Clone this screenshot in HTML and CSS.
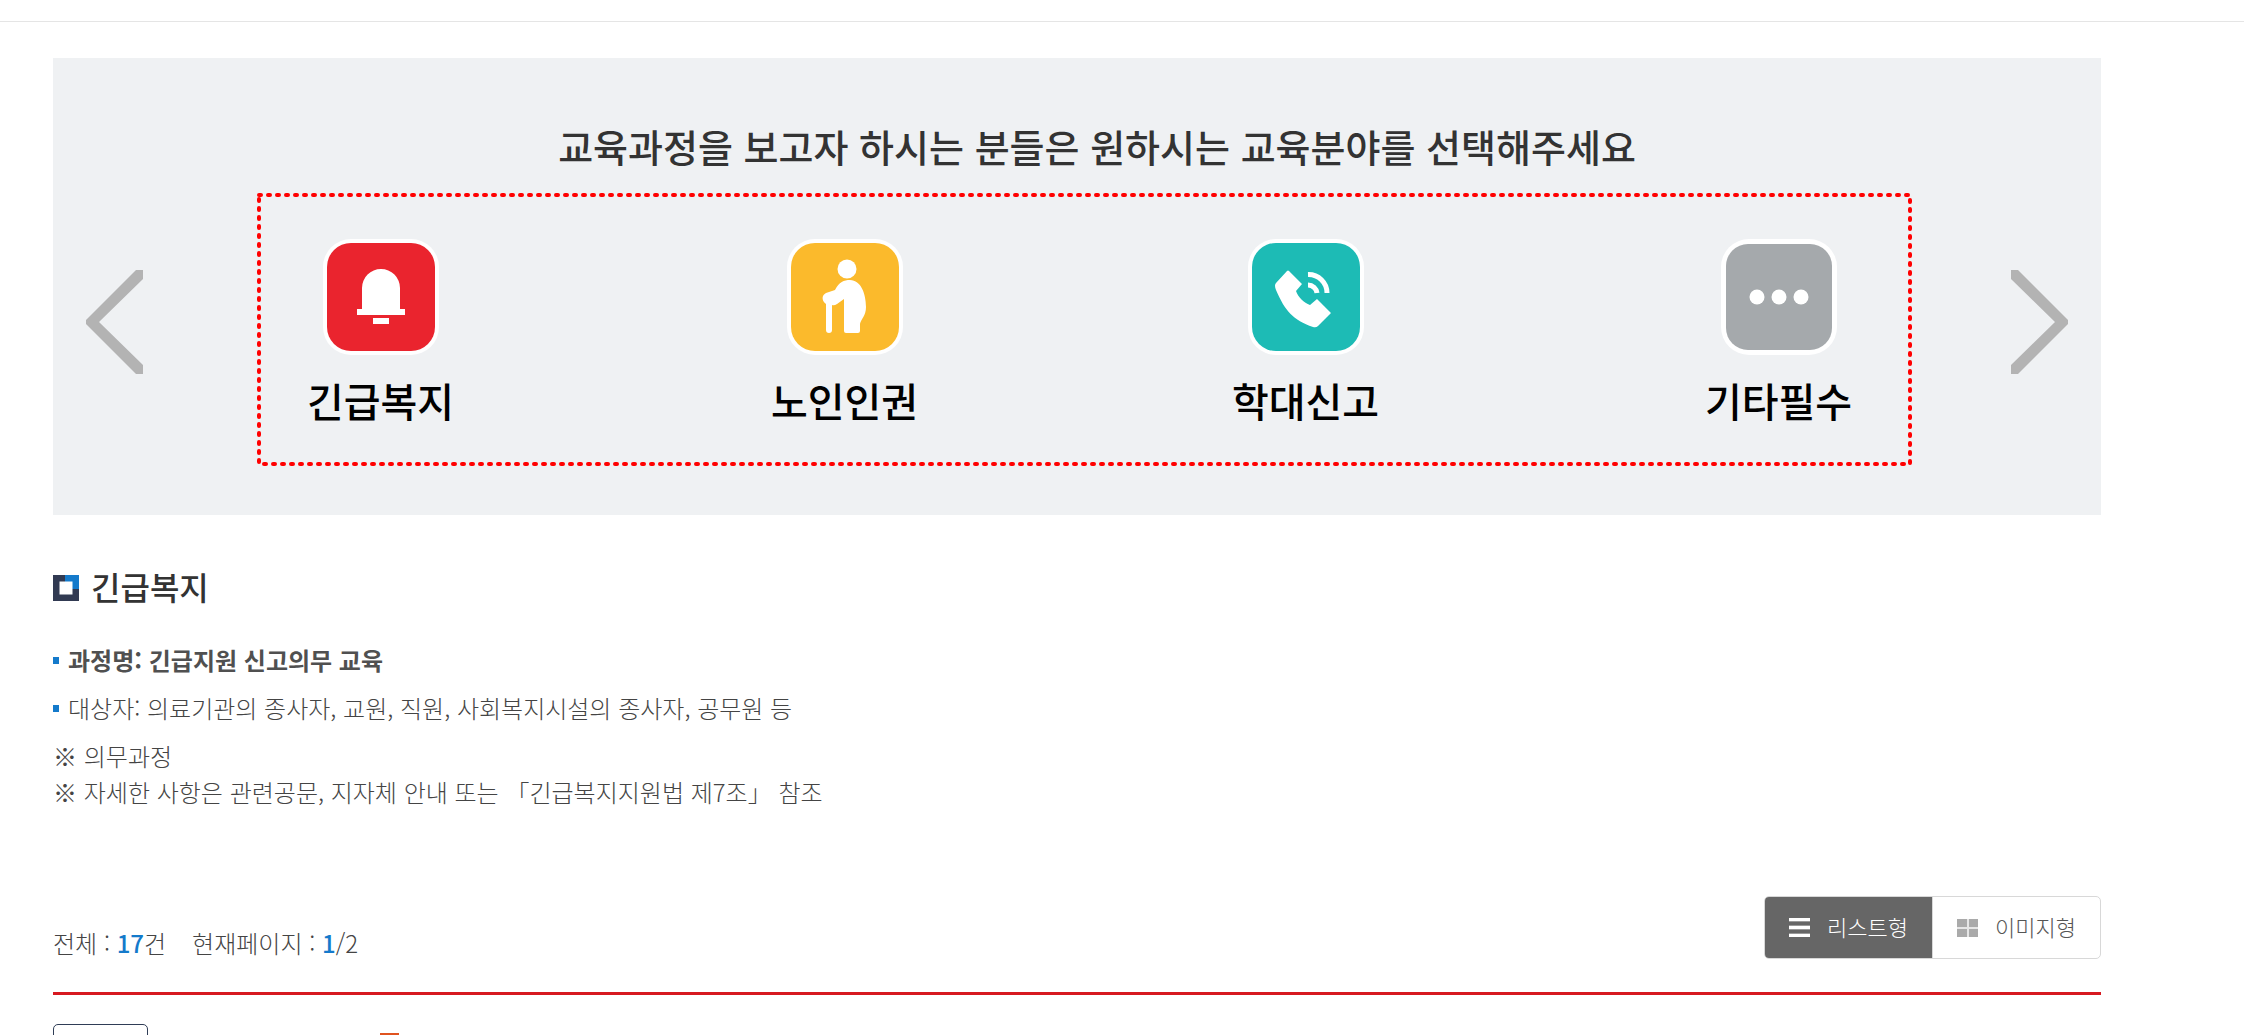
FILE: index.html
```html
<!DOCTYPE html>
<html lang="ko">
<head>
    <meta charset="UTF-8">
    <meta name="viewport" content="width=device-width, initial-scale=1.0">
    <title>긴급복지</title>
    <link rel="stylesheet" href="styles.css">
</head>
<body>
    <header class="top-bar"></header>
    <main class="content">
        <section class="category-panel">
            <h2>교육과정을 보고자 하시는 분들은 원하시는 교육분야를 선택해주세요</h2>
            <div class="category-row">
                <button type="button" class="arrow" aria-label="이전">
                    <svg width="57" height="104" viewBox="0 0 57 104"><path fill="#b3b3b3" d="M0 50 50 0h7v9L13 52l44 43v9h-7L0 54z"/></svg>
                </button>
                <div class="category-list">
                    <svg class="dashed-frame"><rect x="2" y="2"/></svg>
                    <a href="#" class="category">
                        <svg class="category-icon" viewBox="0 0 116 116">
                            <rect width="116" height="116" rx="28" fill="#fff"/>
                            <rect x="4" y="4" width="108" height="108" rx="24" fill="#ea242e"/>
                            <path fill="#fff" d="M39 70V49a19 19 0 0 1 38 0v21h5v6H34v-6zM50 79h16v6H50z"/>
                        </svg>
                        <span>긴급복지</span>
                    </a>
                    <a href="#" class="category">
                        <svg class="category-icon" viewBox="0 0 116 116">
                            <rect width="116" height="116" rx="28" fill="#fff"/>
                            <rect x="4" y="4" width="108" height="108" rx="24" fill="#fbba2c"/>
                            <circle cx="60" cy="30" r="9.500" fill="#fff"/>
                            <path fill="#fff" d="M48 51C52 43 57 41 63 41c11 0 16 14 16 27 0 9-5 12-6 17v7q0 2-2 2H59q-2 0-2-2V60l-7 5q-3 2-5 1v25a3 3 0 0 1-6 0V65c-5-4-4-9 0-11z"/>
                        </svg>
                        <span>노인인권</span>
                    </a>
                    <a href="#" class="category">
                        <svg class="category-icon" viewBox="0 0 116 116">
                            <rect width="116" height="116" rx="28" fill="#fff"/>
                            <rect x="4" y="4" width="108" height="108" rx="24" fill="#1dbbb5"/>
                            <path fill="#fff" d="M39 32q1-1 2 0l13 13-6 7c2 6 8 12 14 14l7-6 14 14-13 13q-2 2-5 1C45 81 37 72 28 51q-2-5 0-7z"/>
                            <path fill="none" stroke="#fff" stroke-width="5" d="M60 35.500a18.500 18.500 0 0 1 19 18.500M60 46a9 9 0 0 1 9 8"/>
                        </svg>
                        <span>학대신고</span>
                    </a>
                    <a href="#" class="category">
                        <svg class="category-icon" viewBox="0 0 116 116">
                            <rect width="116" height="116" rx="28" fill="#fff"/>
                            <rect x="5" y="5" width="106" height="106" rx="22" fill="#a5a9ac"/>
                            <g fill="#fff"><circle cx="36" cy="58" r="7.500"/><circle cx="58" cy="58" r="7.500"/><circle cx="80" cy="58" r="7.500"/></g>
                        </svg>
                        <span>기타필수</span>
                    </a>
                </div>
                <button type="button" class="arrow" aria-label="다음">
                    <svg width="57" height="104" viewBox="0 0 57 104"><path fill="#b3b3b3" d="M57 50 7 0H0v9l44 43L0 95v9h7l50-50z"/></svg>
                </button>
            </div>
        </section>

        <section class="course-info">
            <h3>
                <svg width="26" height="26" viewBox="0 0 26 26">
                    <path fill="#313a52" d="M0 0h26v26H0z"/>
                    <path fill="#147acb" d="M12 0h14v14H12z"/>
                    <path fill="#fff" d="M6.500 6.500h13v13h-13z"/>
                </svg>
                긴급복지
            </h3>
            <ul>
                <li><strong>과정명: 긴급지원 신고의무 교육</strong></li>
                <li>대상자: 의료기관의 종사자, 교원, 직원, 사회복지시설의 종사자, 공무원 등</li>
            </ul>
            <p>※ 의무과정</p>
            <p>※ 자세한 사항은 관련공문, 지자체 안내 또는 「긴급복지지원법 제7조」 참조</p>
        </section>

        <div class="list-top">
            <p class="list-count">
                <span>전체 : <b>17</b>건</span>
                <span>현재페이지 : <b>1</b>/2</span>
            </p>
            <div class="view-type">
                <button type="button" class="active">
                    <svg width="21" height="20" viewBox="0 0 21 20"><path fill="#fff" d="M0 0h21v3H0zM0 8h21v3H0zM0 16h21v3H0z"/><path fill="#999" d="M0 3h21v1H0zM0 7h21v1H0zM0 11h21v1H0zM0 15h21v1H0z"/></svg>
                    리스트형
                </button>
                <button type="button">
                    <svg width="21" height="20" viewBox="0 0 21 20"><path fill="#e6e6e6" d="M0 1h21v18H0z"/><path fill="#aaa" d="M0 1h10v8H0zM12 1h9v8h-9zM0 11h10v8H0zM12 11h9v8h-9z"/></svg>
                    이미지형
                </button>
            </div>
        </div>

        <div class="course-list">
            <span class="course-label"></span>
            <span class="course-mark"></span>
        </div>
    </main>
</body>
</html>
```

FILE: styles.css
```css
* {
    margin: 0;
    padding: 0;
    box-sizing: border-box;
}

body {
    height: 100vh;
    overflow: hidden;
    background: #fff;
    color: #444;
    font-family: "Noto Sans CJK KR", sans-serif;
    font-size: 24px;
    font-weight: 300;
    line-height: 36px;
}

button {
    border: none;
    background: none;
    font: inherit;
    color: inherit;
    cursor: pointer;
}

svg {
    display: block;
    flex-shrink: 0;
}

.top-bar {
    height: 22px;
    border-bottom: 1px solid #e5e5e5;
}

.content {
    padding: 36px 143px 0 53px;
}

/* category selector */
.category-panel {
    padding: 58px 33px 49px;
    background: #eff1f3;
}

.category-panel h2 {
    padding-left: 40px;
    margin-bottom: 17px;
    color: #333;
    font-size: 38px;
    font-weight: 500;
    line-height: 60px;
    text-align: center;
}

.category-row {
    display: flex;
    align-items: center;
}

.arrow {
    padding-bottom: 16px;
}

.category-list {
    position: relative;
    flex: 1;
    display: grid;
    grid-template-columns: 464fr 461fr 473fr 147px;
    margin: 0 99px 0 114px;
    padding: 46px 60px 36px 50px;
}

.dashed-frame {
    position: absolute;
    top: 0;
    left: 0;
    width: 100%;
    height: 100%;
    pointer-events: none;
}

.dashed-frame rect {
    width: calc(100% - 4px);
    height: calc(100% - 4px);
    fill: none;
    stroke: #f00;
    stroke-width: 4px;
    stroke-dasharray: 2 7;
    stroke-linecap: round;
}

.category {
    width: 147px;
    display: flex;
    flex-direction: column;
    align-items: center;
    gap: 15px;
    color: #000;
    font-size: 40px;
    font-weight: 500;
    line-height: 60px;
    text-decoration: none;
    white-space: nowrap;
}

.category-icon {
    width: 116px;
    height: 116px;
}

/* course description */
.course-info {
    padding-top: 46px;
}

.course-info h3 {
    display: flex;
    align-items: center;
    gap: 12px;
    margin-bottom: 31px;
    color: #333;
    font-size: 32px;
    font-weight: 500;
    line-height: 50px;
}

.course-info h3 svg {
    margin-top: 4px;
}

.course-info ul {
    list-style: none;
}

.course-info li {
    display: flex;
    align-items: center;
    gap: 9px;
    margin-bottom: 12px;
}

.course-info li::before {
    content: "";
    width: 6px;
    height: 7px;
    background: #147acb;
}

.course-info strong {
    color: #505050;
    font-weight: 700;
}

/* list header */
.list-top {
    display: flex;
    justify-content: space-between;
    align-items: flex-end;
    margin-top: 86px;
    padding-bottom: 33px;
    border-bottom: 3px solid #d71920;
}

.list-count {
    display: flex;
    gap: 26px;
    line-height: 32px;
}

.list-count b {
    color: #147acb;
    font-weight: 500;
}

.view-type {
    display: flex;
    border: 1px solid #d8d8d8;
    border-radius: 5px;
    overflow: hidden;
}

.view-type button {
    display: flex;
    align-items: center;
    gap: 17px;
    padding: 0 24px 2px;
    color: #555;
    font-size: 22px;
    line-height: 59px;
}

.view-type button svg {
    margin-top: 2px;
}

.view-type button + button {
    border-left: 1px solid #d8d8d8;
}

.view-type .active {
    background: #666;
    color: #fff;
}

/* course list */
.course-list {
    display: flex;
    align-items: flex-start;
    gap: 232px;
    padding-top: 29px;
}

.course-label {
    width: 95px;
    height: 40px;
    border: 1px solid #2f3d56;
    border-radius: 5px;
}

.course-mark {
    width: 19px;
    height: 20px;
    margin-top: 9px;
    background: #e0531f;
}
```
